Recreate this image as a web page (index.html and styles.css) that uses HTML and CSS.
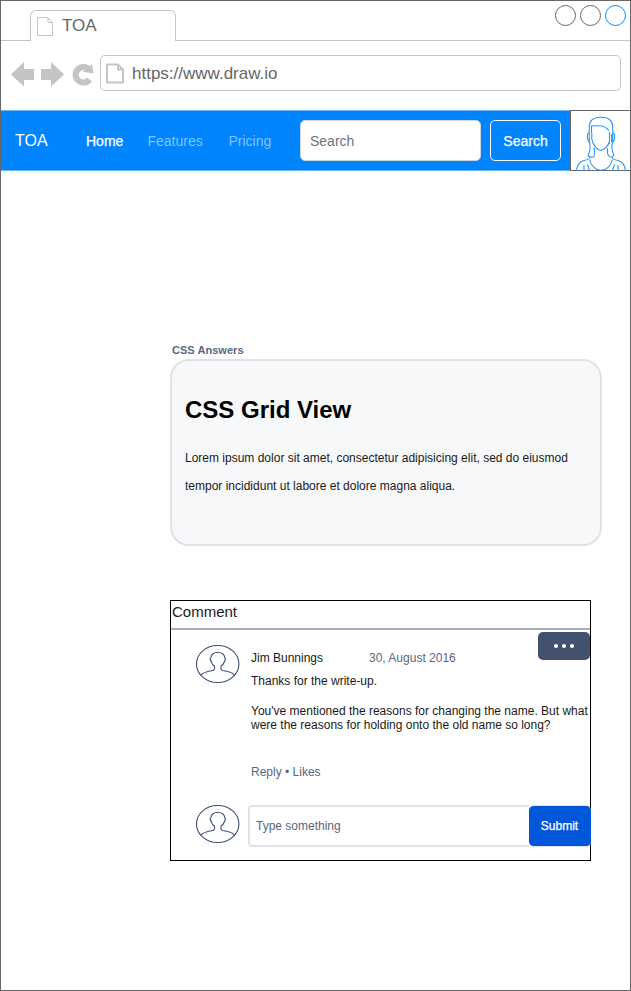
FILE: index.html
```html
<!DOCTYPE html>
<html lang="en">
<head>
<meta charset="utf-8">
<title>TOA</title>
<link rel="stylesheet" href="styles.css">
</head>
<body>
<svg width="0" height="0" class="defs">
  <defs>
    <g id="user" fill="none" stroke="#3d4f78" stroke-width="1.1">
      <ellipse cx="21.700" cy="19" rx="21.200" ry="18.500"/>
      <path d="M4.500 30C8 27 13 26.200 17 25.500C19 25 18.700 23 18.500 21C16.500 20 15.800 18.500 15.500 17C14 15.500 14.200 13.500 15 12.500C15 9.500 18 7.300 21.700 7.300C25.500 7.300 28.700 9.500 28.700 12.500C29.500 13.500 29.500 15.500 28.200 17C27.800 18.500 27 20 25 21C24.800 23 24.600 25 26.500 25.500C31 26.200 36 27 39 30"/>
    </g>
  </defs>
</svg>
<div class="window">
  <header class="tabs">
    <div class="tab">
      <svg width="18" height="21"><path d="M.500 1.500h10l5 5v13h-15zM11 1.500v5h4.500" fill="#fff" stroke="#c4c4c4"/></svg>
      <span>TOA</span>
    </div>
    <svg class="controls" width="72" height="22" fill="none" stroke="#666">
      <circle cx="10.500" cy="10.500" r="10"/><circle cx="35.500" cy="10.500" r="10"/><circle cx="60.500" cy="10.500" r="10" stroke="#008cff"/>
    </svg>
  </header>
  <div class="toolbar">
    <svg width="84" height="26" fill="#c4c4c4">
      <path d="M0 13.500L13 1V8H23V19H13V25.500z"/>
      <path d="M53 13.500L40 1V8H30V19H40V25.500z"/>
      <path d="M77.200 7.800A7.700 7.700 0 1 0 78.500 18.500" fill="none" stroke="#c4c4c4" stroke-width="6.200"/>
      <path d="M81 3L82.500 12.500L72 10.800z"/>
    </svg>
    <div class="address">
      <svg width="18" height="21"><path d="M1 1.500h11l5 5v13h-16zM12 1.500v5h5" fill="#fff" stroke="#c4c4c4" stroke-width="1.900"/></svg>
      <span>https://www.draw.io</span>
    </div>
  </div>
  <nav class="navbar">
    <div class="links">
      <span class="brand">TOA</span>
      <span class="home">Home</span>
      <span class="muted features">Features</span>
      <span class="muted">Pricing</span>
    </div>
    <div class="search">Search</div>
    <div class="search-btn">Search</div>
    <div class="avatar">
      <svg width="59" height="62" fill="none" stroke="#2b96f5" stroke-width="1.100">
        <path d="M18.300 22.500V17C18.300 10 23 7.300 30 7.300S41.700 10 41.700 17V22.500"/>
        <path d="M20.500 23V16C28 15.500 34 15 37.700 20.700"/>
        <path d="M20.800 23V29C22 36 27 40.500 29.700 40.500S37.500 36 38.700 31"/>
        <path d="M18.300 22.500C15.700 23 15.700 30 18.300 32.500M41.700 22.500C44.300 23 44.300 30 41.700 32.500M18.300 22.500V31C19.500 36 19 42 17 45.500C19 47.500 21 47.500 22.500 47C24 45 23.700 42 23.300 38M41.700 22.500V31C40.500 36 41 42 43 45C41 47.500 39 47.500 37.500 45.500C36 44 36.500 41 36.500 38M38.500 22V34M40.500 24V32"/>
        <path d="M5.500 61C6 55 9 51.500 13 50.500C17 49.700 18.700 49 19 47M54.500 61C54 55 51 51.500 47 50.500C43 49.700 41.300 49 41 47"/>
        <path d="M18.500 49.500C20 56 25 60.300 30 60.300S40 56 41.500 49.500M13 55V61M47 55V61M16.500 54.500L18.700 61M43.500 54.500L41.300 61"/>
      </svg>
    </div>
  </nav>
  <main>
    <div class="label">CSS Answers</div>
    <section class="card">
      <h1>CSS Grid View</h1>
      <p>Lorem ipsum dolor sit amet, consectetur adipisicing elit, sed do eiusmod tempor incididunt ut labore et dolore magna aliqua.</p>
    </section>
    <section class="comments">
      <h2>Comment</h2>
      <article class="comment">
        <svg class="user" width="44" height="39"><use href="#user"/></svg>
        <div class="body">
          <div class="meta"><span class="name">Jim Bunnings</span><span class="date">30, August 2016</span></div>
          <p class="first">Thanks for the write-up.</p>
          <p>You've mentioned the reasons for changing the name. But what were the reasons for holding onto the old name so long?</p>
          <div class="actions">Reply • Likes</div>
        </div>
        <div class="more"><i></i><i></i><i></i></div>
      </article>
      <div class="reply">
        <svg class="user" width="44" height="39"><use href="#user"/></svg>
        <div class="field">Type something</div>
        <div class="submit">Submit</div>
      </div>
    </section>
  </main>
</div>
</body>
</html>
```
FILE: styles.css
```css
* { box-sizing: border-box; }
body { margin: 0; background: #fff; font: 12px/14px "Liberation Sans", Arial, sans-serif; color: #1a1a1a; }
h1, h2, p { margin: 0; }
svg { display: block; flex: none; }
.defs { position: absolute; }
.window { width: 631px; height: 991px; border: 1px solid #666; }
.tabs { height: 40px; border-bottom: 1px solid #c4c4c4; display: flex; justify-content: space-between; padding-left: 29px; }
.tab { width: 146px; height: 31px; margin-top: 9px; border: 1px solid #c4c4c4; border-bottom: 0; border-radius: 6px 6px 0 0; background: #fff; display: flex; padding: 5px 0 0 6px; gap: 7px; font-size: 17px; line-height: 20px; color: #666; }
.controls { margin-top: 4px; margin-right: 3px; }
.toolbar { height: 69px; display: flex; align-items: flex-start; padding: 14px 9px 0 10px; gap: 5px; }
.toolbar > svg { margin-top: 6px; }
.address { flex: 1; height: 36px; border: 1px solid #c4c4c4; border-radius: 5px; display: flex; padding: 7px 0 0 5px; gap: 8px; font-size: 17px; line-height: 20px; color: #666; }
.address span { margin-top: 1px; }
.navbar { height: 61px; background: #0085ff; border: solid #66b3f5; border-width: 1px 0; display: flex; align-items: center; color: #fff; font-size: 14px; line-height: 16px; }
.links { width: 299px; padding-left: 14px; display: flex; align-items: center; }
.brand { font-size: 16px; width: 71px; }
.home { width: 61.5px; -webkit-text-stroke: .25px #fff; }
.features { width: 81px; }
.muted { color: #80c2ff; }
.search { width: 181px; height: 41px; border: 1px solid #ced4da; border-radius: 5px; background: #fff; color: #6c757d; padding: 12px 9px; }
.search-btn { width: 71px; height: 41px; margin-left: 9px; border: 1px solid #fff; border-radius: 5px; text-align: center; padding-top: 12px; -webkit-text-stroke: .25px #fff; }
.avatar { width: 60px; height: 61px; margin-left: auto; background: #fff; border: solid #666; border-width: 1px 0 1px 1px; }
.avatar svg { overflow: visible; margin-top: -1px; }
main { padding: 173px 28px 0 169px; }
.label { padding-left: 2px; font-weight: bold; font-size: 11px; line-height: 13px; color: #596780; letter-spacing: .04px; }
.card { width: 431.5px; height: 187px; margin-top: 2px; border: 2px solid #dfe3e8; border-radius: 19px; background: #f7f8fa; padding: 34px 15px 0 13px; }
.card h1 { font-size: 24px; line-height: 30px; color: #000; }
.card p { margin-top: 19px; line-height: 28px; }
.comments { width: 421px; height: 261px; margin-top: 54px; border: 1px solid #000; }
.comments h2 { height: 29px; border-bottom: 2px solid #a6aec0; padding: 1px; font-weight: normal; font-size: 15px; line-height: 20px; }
.comment { height: 175px; display: flex; position: relative; padding-left: 25px; }
.comment .user { margin-top: 15px; }
.body { width: 350px; margin-left: 11px; padding-top: 21px; }
.meta { display: flex; }
.name { width: 118px; }
.date, .actions { color: #596780; }
.first { margin: 9px 0 16px; }
.actions { margin-top: 33px; }
.more { position: absolute; right: 0; top: 2px; width: 52px; height: 28px; border-radius: 5px; background: #42526e; display: flex; align-items: center; justify-content: center; gap: 3.500px; }
.more i { width: 4.500px; height: 4.500px; border-radius: 50%; background: #fff; }
.reply { width: 421px; display: flex; padding-left: 25px; }
.field { width: 281px; height: 42px; margin-left: 8px; border: 2px solid #dfe3e8; border-right: 0; border-radius: 4px 0 0 4px; padding: 12px 6px; color: #596780; background: #fff; }
.submit { width: 62px; height: 42px; border: 1px solid #dfe3e8; border-width: 1px 0; border-radius: 5px; background: #0057d8; color: #fff; text-align: center; padding: 13px 1px 0 0; -webkit-text-stroke: .25px #fff; }
```
